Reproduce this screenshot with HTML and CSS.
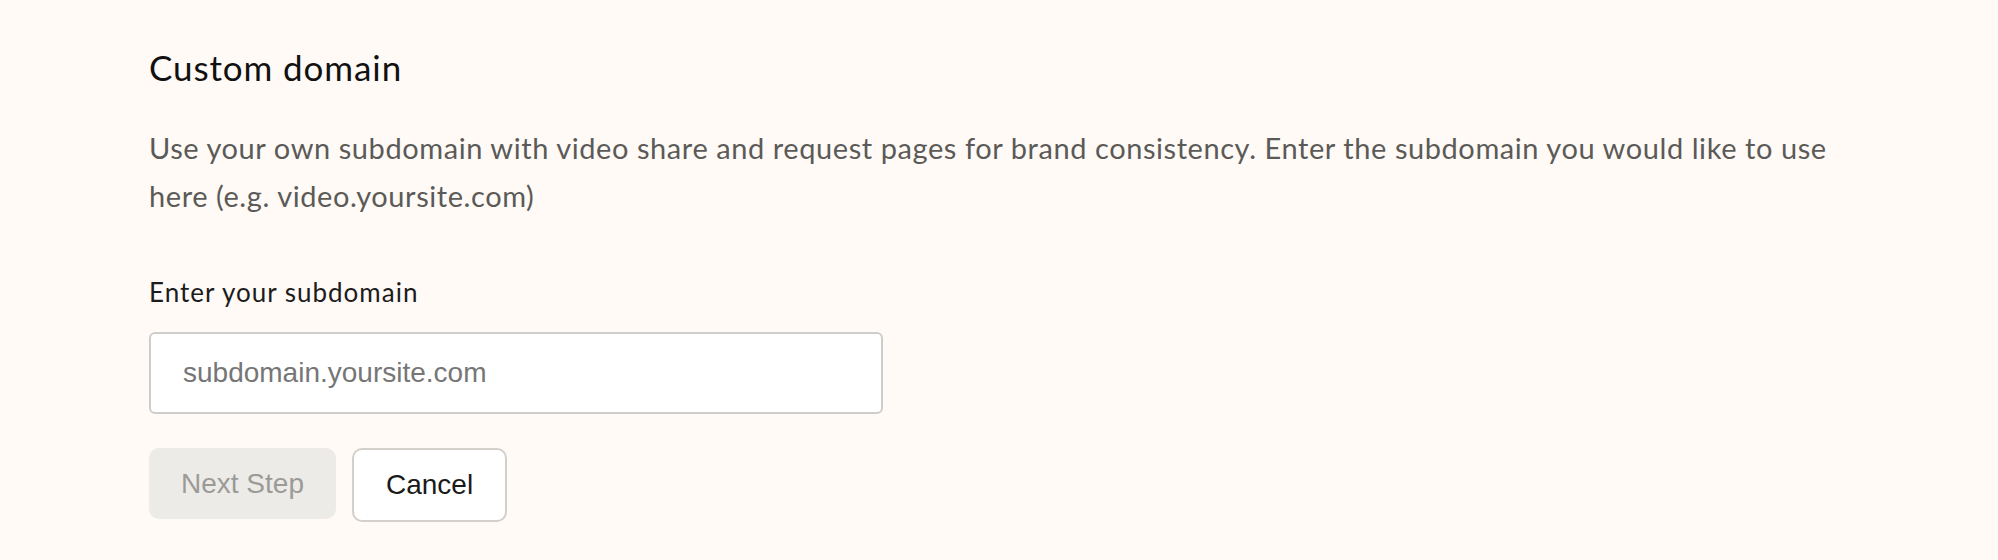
FILE: index.html
```html
<!DOCTYPE html>
<html lang="en">

<head>
  <meta charset="UTF-8">
  <meta name="viewport" content="width=device-width, initial-scale=1.0">
  <title>Custom domain</title>
  <link rel="stylesheet" href="styles.css">
</head>

<body>

  <form class="domain-form">
    <h2 class="form-title">Custom domain</h2>
    <p class="form-intro">Use your own subdomain with video share and request pages for brand consistency. Enter the subdomain you would like to use here (e.g. video.yoursite.com)</p>

    <label class="field-label" for="subdomain">Enter your subdomain</label>
    <input class="field-input" type="text" id="subdomain" name="subdomain" placeholder="subdomain.yoursite.com">

    <div class="form-actions">
      <button class="btn btn-primary" type="button" disabled>Next Step</button>
      <button class="btn btn-secondary" type="button">Cancel</button>
    </div>
  </form>

</body>

</html>
```

FILE: styles.css
```css
body {
  margin: 0;
  background-color: #fffaf6;
  font-family: 'Lato', 'Helvetica', sans-serif;
}

.domain-form {
  display: flex;
  flex-direction: column;
  align-items: flex-start;
  width: 1700px;
  padding: 46px 0 0 149px;
}

.form-title {
  margin: 0;
  font-size: 35px;
  line-height: 42px;
  font-weight: 400;
  letter-spacing: 0.9px;
  color: #111;
}

.form-intro {
  margin: 36px 0 0 0;
  font-size: 29px;
  line-height: 48px;
  letter-spacing: 0.57px;
  color: #5b5a58;
}

.field-label {
  margin-top: 57px;
  font-size: 26px;
  line-height: 30px;
  letter-spacing: 1px;
  color: #1c1c1c;
}

.field-input {
  box-sizing: border-box;
  width: 734px;
  height: 82px;
  margin-top: 25px;
  padding: 0 32px;
  border: 2px solid #cfcdca;
  border-radius: 6px;
  background: #fff;
  font-family: 'Liberation Sans', Arial, sans-serif;
  font-size: 28px;
  color: #222;
}

.field-input::placeholder {
  color: #767676;
}

.form-actions {
  display: flex;
  align-items: flex-start;
  gap: 16px;
  margin-top: 34px;
}

.btn {
  box-sizing: border-box;
  padding: 0 32px;
  border-radius: 10px;
  font-family: 'Liberation Sans', Arial, sans-serif;
  font-size: 28px;
  cursor: pointer;
}

.btn-primary {
  height: 71px;
  border: none;
  background-color: #ecebe8;
  color: #9b9a97;
}

.btn-primary:disabled {
  cursor: default;
}

.btn-secondary {
  height: 74px;
  border: 2px solid #d3d0cb;
  background-color: #fff;
  color: #1a1a1a;
}
```
